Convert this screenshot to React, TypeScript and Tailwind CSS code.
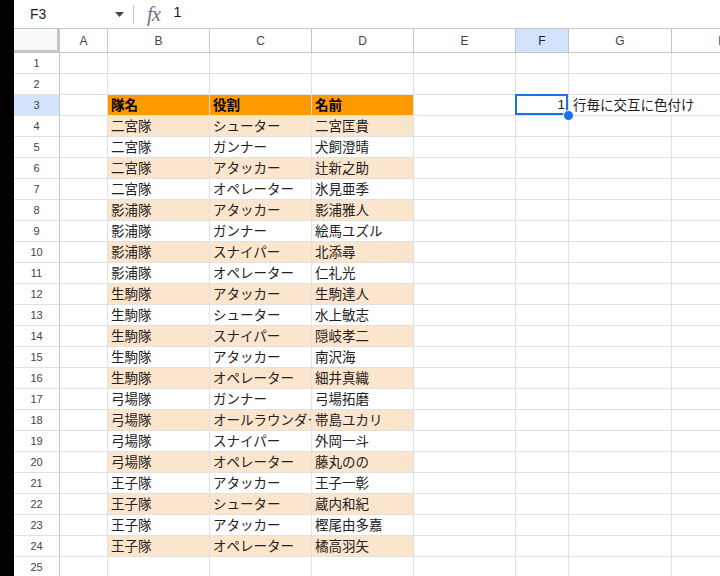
import React from 'react';

const cols = ['A', 'B', 'C', 'D', 'E', 'F', 'G', 'H'];

const data: [string, string, string][] = [
  ['二宮隊', 'シューター', '二宮匡貴'],
  ['二宮隊', 'ガンナー', '犬飼澄晴'],
  ['二宮隊', 'アタッカー', '辻新之助'],
  ['二宮隊', 'オペレーター', '氷見亜季'],
  ['影浦隊', 'アタッカー', '影浦雅人'],
  ['影浦隊', 'ガンナー', '絵馬ユズル'],
  ['影浦隊', 'スナイパー', '北添尋'],
  ['影浦隊', 'オペレーター', '仁礼光'],
  ['生駒隊', 'アタッカー', '生駒達人'],
  ['生駒隊', 'シューター', '水上敏志'],
  ['生駒隊', 'スナイパー', '隠岐孝二'],
  ['生駒隊', 'アタッカー', '南沢海'],
  ['生駒隊', 'オペレーター', '細井真織'],
  ['弓場隊', 'ガンナー', '弓場拓磨'],
  ['弓場隊', 'オールラウンダー', '帯島ユカリ'],
  ['弓場隊', 'スナイパー', '外岡一斗'],
  ['弓場隊', 'オペレーター', '藤丸のの'],
  ['王子隊', 'アタッカー', '王子一彰'],
  ['王子隊', 'シューター', '蔵内和紀'],
  ['王子隊', 'アタッカー', '樫尾由多嘉'],
  ['王子隊', 'オペレーター', '橘高羽矢'],
];

const cell = 'h-[21px] border-r border-b border-[#e1e1e1] px-[3px] pt-[2px] flex items-center whitespace-nowrap overflow-hidden text-[13.5px] text-[#222]';

function Row({ r }: { r: number }) {
  const isHead = r === 3;
  const item = r >= 4 && r <= 24 ? data[r - 4] : null;
  const tableBg = isHead ? 'bg-[#ff9900] font-bold text-black' : item && r % 2 === 0 ? 'bg-[#fce5cd]' : 'bg-white';
  const values: string[] = isHead ? ['隊名', '役割', '名前'] : item ? item : ['', '', ''];

  return (
    <>
      <div
        className={`h-[21px] border-r border-r-[#c4c7c5] border-b border-b-[#e1e1e1] flex items-center justify-center text-[11px] text-[#444] ${
          isHead ? 'bg-[#d3e3fd] text-[#1f1f1f]' : 'bg-white'
        }`}
      >
        {r}
      </div>
      <div className={cell}></div>
      {values.map((v, i) => (
        <div key={i} className={`${cell} ${tableBg}`}>
          {v}
        </div>
      ))}
      <div className={cell}></div>
      {isHead ? (
        <div className="relative h-[21px] border-r border-b border-[#e1e1e1] z-10">
          <div className="absolute -left-px -top-px w-[calc(100%+1px)] h-[21px] border-2 border-[#1a73e8] pt-[2px] flex items-center justify-end pr-[1px] text-[13.5px] text-[#222]">
            1
          </div>
          <div className="absolute -right-[6px] -bottom-[6px] w-[11px] h-[11px] rounded-full bg-[#1a73e8] border border-white" />
        </div>
      ) : (
        <div className={cell}></div>
      )}
      {isHead ? (
        <div className="h-[21px] border-b border-[#e1e1e1] pl-[4px] pt-[2px] flex items-center whitespace-nowrap text-[13.5px] text-[#222] overflow-visible z-0">
          行毎に交互に色付け
        </div>
      ) : (
        <div className={cell}></div>
      )}
      <div className={cell}></div>
    </>
  );
}

export default function App() {
  const rows = Array.from({ length: 25 }, (_, i) => i + 1);
  return (
    <div className="flex w-[720px] h-[576px] overflow-hidden bg-white font-['Liberation_Sans','Noto_Sans_CJK_JP',sans-serif]">
      <div className="w-[14px] shrink-0 bg-black" />
      <div className="flex-1 min-w-0 flex flex-col overflow-hidden">
        <div className="h-[29px] shrink-0 flex items-center border-b border-[#c4c7c5]">
          <div className="w-[119px] flex items-center pl-[16px] pr-[9px]">
            <span className="text-[14px] text-[#1f1f1f] flex-1">F3</span>
            <svg width="9" height="5" viewBox="0 0 9 5">
              <path d="M0 0h9L4.5 5z" fill="#444" />
            </svg>
          </div>
          <div className="w-px h-[19px] bg-[#c4c7c5]" />
          <span className="ml-[13px] text-[21px] italic text-[#7d6f86] font-['Liberation_Serif',serif] leading-none tracking-[-1px]">
            fx
          </span>
          <span className="ml-[13px] text-[15px] text-[#1f1f1f] -mt-[4px]">1</span>
        </div>
        <div className="grid grid-cols-[46px_48px_102px_102px_102px_102px_53px_103px_102px] w-max">
          <div className="h-[24px] bg-[#f8f9fa] border-r-[3px] border-b-[3px] border-[#c4c7c5]" />
          {cols.map((c) => (
            <div
              key={c}
              className={`h-[24px] border-r border-b border-[#c4c7c5] flex items-center justify-center text-[12px] ${
                c === 'F' ? 'bg-[#d3e3fd] text-[#1f1f1f]' : 'bg-white text-[#444]'
              }`}
            >
              {c}
            </div>
          ))}
          {rows.map((r) => (
            <Row key={r} r={r} />
          ))}
        </div>
      </div>
    </div>
  );
}
